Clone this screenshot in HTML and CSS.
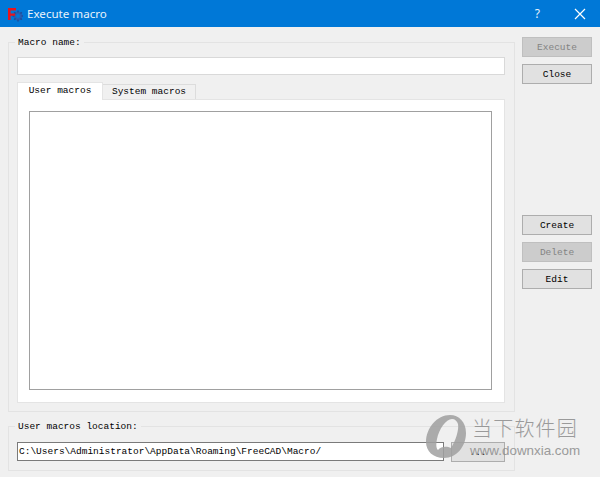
FILE: index.html
```html
<!DOCTYPE html>
<html lang="en">
<head>
<meta charset="utf-8">
<title>Execute macro</title>
<link rel="stylesheet" href="styles.css">
</head>
<body>
<div class="window">
  <header class="titlebar">
    <svg class="app-icon" width="16" height="16" viewBox="0 0 16 16">
      <circle cx="11" cy="10" r="3.2" fill="none" stroke="#2a5fb0" stroke-width="2.6"/>
      <path d="M11 4.5v2M11 13.5v2M5.5 10h2M14.5 10h1.5M7.2 6.2l1.4 1.4M13.4 12.4l1.4 1.4M14.8 6.2l-1.4 1.4M8.6 12.4l-1.4 1.4" stroke="#1c4f9e" stroke-width="1.6"/>
      <path d="M1 2h8v2.4H3.6v3H8v2.3H3.6V14H1z" fill="#e8141c"/>
    </svg>
    <span class="title">Execute macro</span>
    <span class="help">?</span>
    <svg class="close-x" width="12" height="12" viewBox="0 0 12 12">
      <path d="M1 1l10 10M11 1L1 11" stroke="#fff" stroke-width="1.2" fill="none"/>
    </svg>
  </header>
  <main class="content">
    <div class="left">
      <section class="group group-name">
        <span class="legend">Macro name:</span>
        <input class="field field-name" type="text">
        <div class="tabs">
          <span class="tab tab-active">User macros</span>
          <span class="tab">System macros</span>
        </div>
        <div class="panel"><div class="list"></div></div>
      </section>
      <section class="group group-loc">
        <span class="legend">User macros location:</span>
        <div class="loc-row">
          <div class="path">C:\Users\Administrator\AppData\Roaming\FreeCAD\Macro/</div>
          <button class="btn btn-browse">...</button>
        </div>
      </section>
    </div>
    <aside class="right">
      <button class="btn btn-off">Execute</button>
      <button class="btn">Close</button>
      <button class="btn btn-create">Create</button>
      <button class="btn btn-off">Delete</button>
      <button class="btn">Edit</button>
    </aside>
  </main>
  <div class="watermark">
    <svg class="wm-logo" width="40" height="43" viewBox="0 0 40 43">
      <path fill-rule="evenodd" d="M24 0C33 0 40 7 40 18C40 31 31 43 18 43C7 43 0 36 0 27C0 13 11 0 24 0ZM26 4C20 4 13 14 11 24C10 29 10 33 12 35C15 31 21 31 25 33C30 25 33 15 32 9C31 6 29 4 26 4Z" fill="#a0a0a0"/>
    </svg>
    <div class="wm-text">
      <span class="wm-cn">当下软件园</span>
      <span class="wm-en">www.downxia.com</span>
    </div>
  </div>
</div>
</body>
</html>
```
FILE: styles.css
```css
* { box-sizing: border-box; }
html, body { margin: 0; padding: 0; }
body { width: 600px; height: 477px; overflow: hidden; background: #f0f0f0; }
.window { position: relative; width: 600px; height: 477px; font-family: "Liberation Mono", monospace; font-size: 9.5px; color: #000; }
.titlebar { height: 27px; background: #0078d7; display: flex; align-items: center; padding-left: 7px; color: #fff; }
.app-icon { flex: none; }
.title { margin-left: 4px; font-family: "Noto Sans", sans-serif; font-size: 11.6px; color: #e8f2fb; }
.help { margin-left: auto; font-family: "Noto Sans", sans-serif; font-size: 12px; color: #e8f2fb; }
.close-x { margin: 0 14px 0 34px; }
.content { display: flex; padding: 10px 8px 0; }
.left { width: 507px; flex: none; }
.right { margin-left: 7px; width: 70px; display: flex; flex-direction: column; gap: 7px; }
.group { position: relative; border: 1px solid #e3e3e3; padding: 0 8px; }
.group-name { margin-top: 5px; height: 370px; padding-top: 14px; }
.group-loc { margin-top: 14px; height: 45px; padding-top: 15px; }
.legend { position: absolute; left: 6px; top: -6px; padding: 0 3px; background: #f0f0f0; line-height: 12px; }
.field { display: block; width: 488px; height: 18px; border: 1px solid #d9d9d9; background: #fff; padding: 0; margin: 0; }
.tabs { display: flex; margin-top: 7px; height: 17px; }
.tab { width: 93px; height: 15px; margin-top: 2px; background: #f0f0f0; border: 1px solid #dcdcdc; border-bottom: 0; border-left: 0; line-height: 14px; text-align: center; }
.tab-active { width: 86px; height: 18px; margin-top: 0; background: #fff; border: 1px solid #e4e4e4; border-bottom: 0; line-height: 15px; position: relative; z-index: 1; }
.panel { width: 488px; height: 304px; background: #fff; border: 1px solid #e4e4e4; padding: 11px; }
.list { width: 463px; height: 279px; background: #fff; border: 1px solid #a0a0a0; }
.loc-row { display: flex; gap: 7px; }
.path { width: 427px; height: 19px; border: 1px solid #7a7a7a; background: #fff; line-height: 17px; padding-left: 1px; white-space: nowrap; overflow: hidden; }
.btn { display: block; width: 70px; height: 20px; padding: 0; font: inherit; color: #000; background: #e1e1e1; border: 1px solid #adadad; }
.btn-off { background: #cccccc; border-color: #bfbfbf; color: #838383; }
.btn-create { margin-top: 124px; }
.btn-browse { width: 54px; }
.watermark { position: absolute; left: 426px; top: 415px; display: flex; opacity: 0.85; pointer-events: none; }
.wm-logo { flex: none; }
.wm-text { display: flex; flex-direction: column; margin-left: 6px; color: #8c8c8c; white-space: nowrap; }
.wm-cn { font-family: "Noto Sans CJK SC", sans-serif; font-size: 20px; line-height: 26px; letter-spacing: 1.2px; font-weight: 300; }
.wm-en { font-family: "Liberation Sans", sans-serif; font-size: 13.4px; line-height: 15px; margin-left: -2px; margin-top: 2px; }
```
